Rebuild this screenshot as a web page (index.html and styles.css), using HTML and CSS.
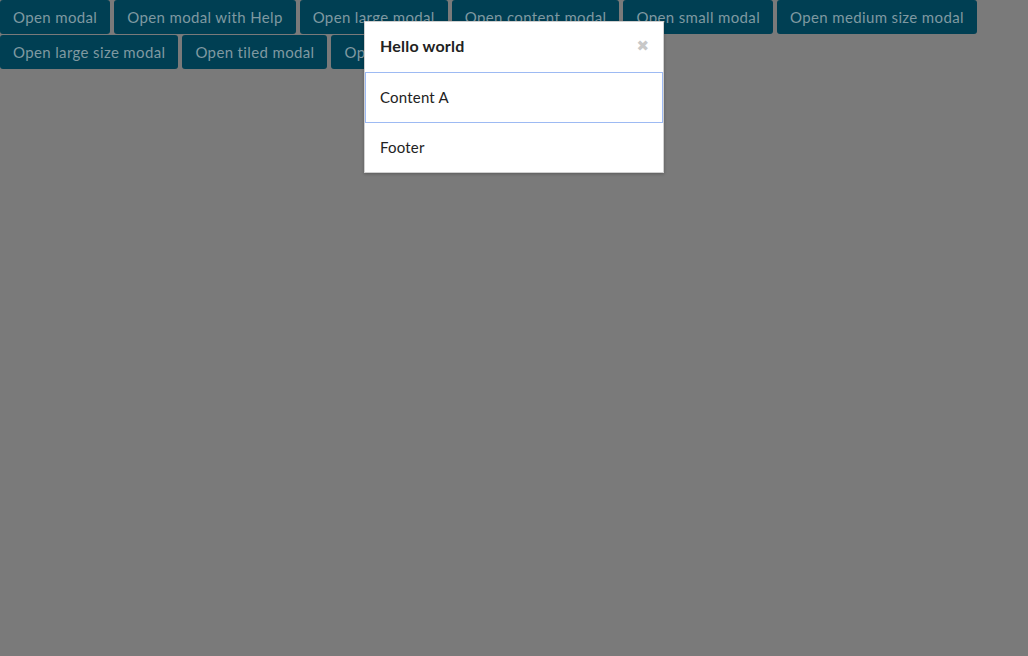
FILE: index.html
```html
<!DOCTYPE html>
<html>
<head>
<meta charset="utf-8">
<link rel="stylesheet" href="styles.css">
</head>
<body>
<div class="buttons">
<button class="btn">Open modal</button>
<button class="btn">Open modal with Help</button>
<button class="btn">Open large modal</button>
<button class="btn">Open content modal</button>
<button class="btn">Open small modal</button>
<button class="btn">Open medium size modal</button>
<button class="btn">Open large size modal</button>
<button class="btn">Open tiled modal</button>
<button class="btn">Open flyout modal</button>
</div>
<div class="modal">
  <div class="modal-header">
    <span class="title">Hello world</span>
    <span class="close">&#x2716;</span>
  </div>
  <div class="modal-content">Content A</div>
  <div class="modal-footer">Footer</div>
</div>
</body>
</html>
```
FILE: styles.css
```css
html, body {
  margin: 0;
  padding: 0;
}
body {
  background: #7a7a7a;
  font-family: Lato, "Open Sans", sans-serif;
  height: 656px;
  overflow: hidden;
}
.buttons {
  font-size: 0;
}
.btn {
  display: inline-block;
  font-family: Lato, "Open Sans", sans-serif;
  font-size: 15px;
  letter-spacing: 0.36px;
  background: #003f53;
  color: #7f99a1;
  border: none;
  border-radius: 3px;
  height: 34px;
  padding: 0 13px 1px;
  margin: 0 4px 1px 0;
  vertical-align: top;
}
.modal {
  position: absolute;
  top: 21px;
  left: 364px;
  width: 298px;
  background: #fff;
  border: 1px solid #d0d0d0;
  box-shadow: 0 1px 3px rgba(0,0,0,0.25);
  color: #222;
}
.modal-header {
  height: 50px;
  box-sizing: border-box;
  display: flex;
  align-items: center;
  justify-content: space-between;
  padding: 0 14px 3px 15px;
}
.title {
  font-weight: 700;
  font-size: 16px;
  letter-spacing: 0.2px;
  color: #222;
}
.close {
  color: #c8c8c8;
  font-size: 15px;
  line-height: 15px;
  margin-top: 2px;
  font-family: "DejaVu Sans", sans-serif;
}
.modal-content {
  height: 48px;
  border: 1px solid #9dbaf3;
  display: flex;
  align-items: center;
  padding: 0 14px 1px;
  font-size: 15px;
  letter-spacing: 0.2px;
}
.modal-footer {
  height: 48px;
  display: flex;
  align-items: center;
  padding: 0 15px 1px;
  font-size: 15px;
  letter-spacing: 0.2px;
}
```
